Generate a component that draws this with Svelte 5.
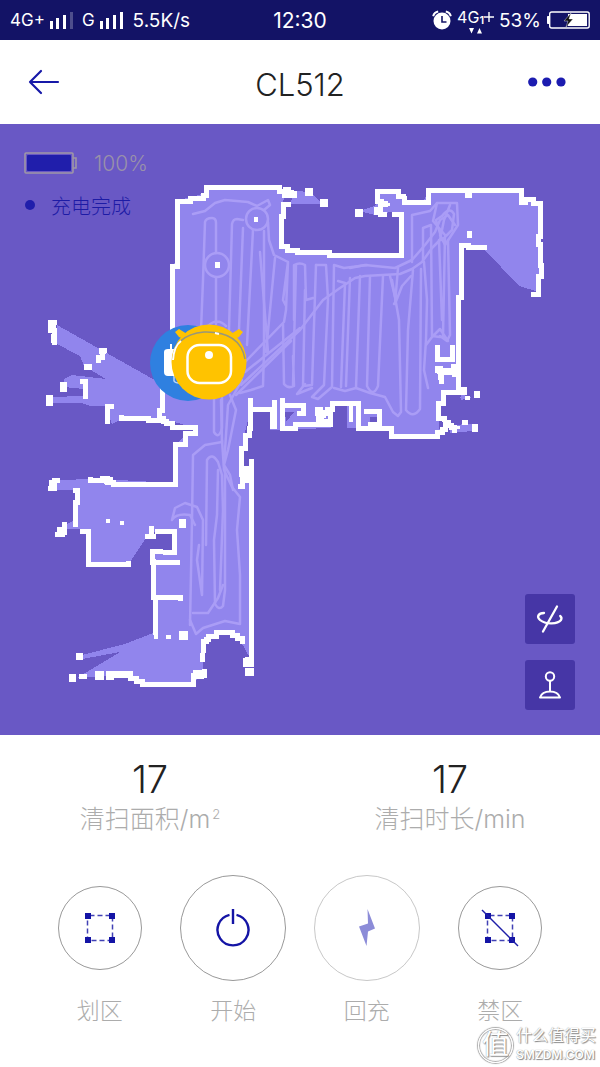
<script lang="ts">
  // Cleaning map, drawn in the same units as the phone screen
  const floor: string[] = [
    '172,266 177,260 177,200 192,197 204,193 206,187 277,187 284,196 283,204 281,218 281,246 292,251 330,254 396,255 401,250 401,213 375,208 378,191 398,191 406,202 422,202 430,191 520,191 522,202 540,203 540,290 536,291 519,286 484,249 461,244 461,340 457,365 460,390 445,395 438,415 440,433 437,436 391,436 391,428 358,428 347,428 347,404 333,404 331,428 270,430 270,410 251,409 245,432 241,485 251,470 251,660 240,640 222,632 206,640 202,673 193,684 140,684 125,675 77,678 120,652 82,659 82,655 125,644 153,633 153,553 175,550 175,532 150,532 130,562 88,562 86,530 60,528 75,520 75,490 52,490 52,480 100,479 174,483 175,446 184,436 197,428 166,420 120,420 112,424 106,406 90,406 82,403 50,403 50,397 84,396 84,389 64,387 64,379 72,375 106,379 84,366 80,356 55,343 57,325 160,383 172,350',
    '295,191 310,192 323,204 290,204',
    '359,211 375,206 400,210 375,215',
    '461,394 472,398 460,400',
    '450,425 472,424 472,431 450,433',
  ];

  const walls: string[] = [
    '172,366 172,266 177,262 177,201 190,201 190,198 203,195 206,187 276,187 279,191 284,193 284,195 294,193',
    '288,204 283,204 283,216 281,218 281,246 287,250 297,250 297,252 329,252 329,255 390,255 401,251 401,214 394,214',
    '384,214 376,209 380,204 385,203 377,198 377,191 398,191 398,196 406,196 404,202 424,202 428,198 428,190 521,190 521,202 525,199 533,203 540,203 540,236 538,244 540,265 541,276 538,284 538,294 533,294',
    '484,247 470,247 468,245 461,245 461,297 458,340 458,370 455,373 458,380 458,389 464,392 445,392 443,403 438,406 438,418 444,419',
    '437,347 437,359 452,359 452,347',
    '458,370 437,368 440,377 441,381',
    '445,372 453,374 453,366',
    '240,486 242,474 241,448 245,435 249,428 250,400',
    '251,409 272,409 272,426 274,426 274,402',
    '282,400 282,428 295,424 330,424 330,413 327,409 332,408 332,403 358,403 358,428 391,428 391,436 437,436 437,432 442,429 445,422 454,430',
    '282,405 303,405 303,413 299,413',
    '317,409 323,415 318,421 328,421',
    '366,411 379,411 379,424 370,426',
    '162,386 162,410 159,418 166,423 172,427 195,427 195,433 185,434 185,444 175,445 175,484 113,482 107,478 102,480 90,479',
    '160,420 148,418 121,417',
    '54,322 50,330 54,342',
    '104,350 102,357 98,360',
    '82,381 85,386 85,396',
    '111,406 107,408 107,421',
    '50,488 54,480 57,480',
    '75,490 77,502 75,524',
    '57,534 62,530 64,524',
    '82,531 88,534 88,564 110,564 128,563',
    '157,531 174,531 174,552 165,552',
    '160,551 152,555 152,562 177,562',
    '153,561 153,597 180,598',
    '155,600 155,632',
    '97,677 97,673 101,677',
    '108,677 108,673 111,677',
    '117,673 128,673 130,678 142,684 193,684 193,675 204,675 204,671',
    '203,650 203,641 208,636 216,632 226,632 232,635 242,641',
    '251,461 251,664 245,660',
    '249,468 246,480',
  ];

  const blobs: [number, number, number, number][] = [
    [283, 187, 8, 7], [305, 188, 8, 8], [289, 190, 5, 5], [320, 199, 8, 8],
    [254, 217, 4, 5], [215, 262, 5, 6], [355, 209, 8, 8], [465, 190, 7, 8],
    [467, 231, 5, 7], [387, 203, 3, 3], [46, 395, 7, 11], [60, 382, 7, 10],
    [50, 321, 6, 8], [51, 334, 6, 9], [99, 348, 7, 6], [84, 364, 8, 6],
    [49, 480, 7, 9], [57, 527, 10, 8], [106, 519, 4, 4], [120, 521, 4, 4],
    [179, 519, 7, 9], [145, 534, 11, 5], [149, 526, 5, 9], [154, 635, 4, 4],
    [166, 635, 5, 4], [179, 631, 9, 9], [76, 653, 7, 7], [69, 674, 7, 8],
    [79, 674, 8, 5], [200, 653, 5, 9], [193, 670, 11, 9], [245, 668, 9, 8],
    [474, 391, 6, 7], [465, 396, 5, 4], [472, 424, 6, 8], [462, 420, 6, 5],
    [457, 426, 3, 3], [245, 657, 9, 6], [437, 369, 14, 5], [452, 364, 9, 13],
    [315, 408, 8, 8], [114, 671, 17, 7], [104, 477, 9, 7], [349, 402, 4, 20],
  ];

  // Vacuum route
  const route: string[] = [
    'M193 214l12-3 10-8 10-3 23 2 9 4 11-6 2 5-6 5',
    'M246 219a11 11 0 1 1 22 0 11 11 0 0 1-22 0z',
    'M205 265a12 12 0 1 1 24 0 12 12 0 0 1-24 0z',
    'M201 330l2-50 2-58q1-4 7-4 4 0 4 5v30M216 278v46M208 326q9-9 18 0',
    'M229 330l3-106q1-5 5-5l6 1M243 228l-4 102M253 230l-6 115M264 231v119l-1 36-12 4-11 3',
    'M268 222l1 18 5 15 14 7-2 48-2 12-39 40M275 258l-9 94M288 262l-5 38 3 6M268 352l-8-100',
    'M283 324l1 60q4 5 10 2l-1-30M294 320v-55q6-3 11 0l1 35 7-2M305 290l-2 96 9-1 4-120M296 265l-3 120',
    'M316 265h10l2 34-4 86-9 9-3 3 6 2 14-12 2-122 10 3 23-3M305 384l-8 10 15-6',
    'M338 281l7 2-4 104M350 278l-4 108M334 388l11 3 11-3 14 5 15 4 8 15 5 4 3-4-2-92-7-40',
    'M241 385l59-55 23-30 17-12 15-10 10-2 35-2 12-5 10-7 10-14 8-8 4-20 6-15',
    'M245 372l55-44M236 395l55-54',
    'M350 268l15-3 30 3 17-8 13-15 10-13 5-12 8-5 7 10',
    'M360 276l-4 112M370 276l-3 110q6 12 11 0l5-110M413 270l-5 60-2 80q7 9 14-1l1-140M412 262v-47l18-4 7-8h20l1 22-13 20-5-10',
    'M390 276l6 25-2 3M398 268l-3 36 7-18 9-10',
    'M423 260v-32l8-3 1 111 8 1M424 262l3 38-1 40-2 30 4 18M426 345l6-8 8-8 8 12M437 203l-4 18 12 14-2 101M448 240l2 95-3 6-7-5M439 240l3 80M442 216q8-10 12-2l-2 16-10 10-6-20z',
    'M190 625l2-105 1-65 12-10 17-3-1-42M206 545l1-85q5-8 11 2l4 13 1 35-3 80',
    'M225 470v120l-2 16q-4 5-8-2l-1-64 3-25 1-45',
    'M172 520l3-12 10-5 12 4 6 13-1 75-5-35 2-15M172 520q4-7 18-5l5 10',
    'M190 620l6 14 7-6 22-7 15 3v-49l-3-45 3-33-8-10-8-17-2-30M193 613h15l10-15 5-13',
    'M230 395l6 15-8 40-4 15 6 10 3 15M214 395v37q5 8 8-4v-30M242 380l-14 25-4 60',
  ];

  function stairs(points: string): string {
    const list = points.split(' ').map((p) => p.split(',').map(Number));
    let d = `M${list[0][0]} ${list[0][1]}`;
    for (let i = 1; i < list.length; i++) {
      const [x0, y0] = list[i - 1];
      const [x1, y1] = list[i];
      const n = Math.max(1, Math.round(Math.min(Math.abs(x1 - x0), Math.abs(y1 - y0)) / 3));
      for (let k = 1; k <= n; k++) {
        const x = Math.round(x0 + ((x1 - x0) * k) / n);
        const y = Math.round(y0 + ((y1 - y0) * k) / n);
        d += `H${x}V${y}`;
      }
    }
    return d;
  }

  const stats = [
    { value: 17, label: '清扫面积/m', sup: '2' },
    { value: 17, label: '清扫时长/min', sup: '' },
  ];

  const actions = [
    { id: 'zone', label: '划区', large: false, disabled: false },
    { id: 'start', label: '开始', large: true, disabled: false },
    { id: 'dock', label: '回充', large: true, disabled: true },
    { id: 'forbid', label: '禁区', large: false, disabled: false },
  ];
</script>

<div class="app">
  <div class="status-bar">
    <div class="status-side">
      <span class="net">4G+</span>
      <svg width="24" height="18" viewBox="0 0 24 18" fill="#fff">
        <path d="M0 10h3v8H0zM6 7h3v11H6zM13 4h3v14h-3z" />
        <path d="M20 1h3v17h-3z" opacity=".25" />
      </svg>
      <span class="net second">G</span>
      <svg width="24" height="18" viewBox="0 0 24 18" fill="#fff">
        <path d="M0 10h3v8H0zM6 7h3v11H6zM13 4h3v14h-3zM20 1h3v17h-3z" />
      </svg>
      <span class="speed">5.5K/s</span>
    </div>
    <span class="clock">12:30</span>
    <div class="status-side right">
      <svg width="20" height="20" viewBox="0 0 20 20">
        <circle cx="10" cy="11" r="8.5" fill="#fff" />
        <path d="M1.2 6.2q1-3.8 5-4.6M18.8 6.2q-1-3.8-5-4.6" fill="none" stroke="#fff" stroke-width="2" />
        <path d="M10 6v6h4.5" fill="none" stroke="#151566" stroke-width="1.6" />
      </svg>
      <div class="roam">
        <span class="net">4G</span>
        <span class="sim">1</span>
        <svg width="10" height="24" viewBox="0 0 10 24">
          <path d="M0 9h10M5 4v10" stroke="#fff" stroke-width="1.4" />
        </svg>
        <svg class="traffic" width="14" height="6" viewBox="0 0 14 6" fill="#fff">
          <path d="M0 0h5L2.500 5.500zM8 5.500h5L10.500 0z" />
        </svg>
      </div>
      <span class="percent">53%</span>
      <svg width="44" height="18" viewBox="0 0 44 18">
        <rect x="3.7" y="1" width="39.5" height="16" rx="2" fill="none" stroke="#fff" stroke-width="1.4" />
        <path d="M3 5.500H1.500v7H3z" fill="#fff" stroke="#fff" />
        <path d="M22 3h19v12H22z" fill="#fff" />
        <path d="M25 2l-7 8h4l-2 6 7-8h-4z" fill="#111" stroke="#fff" stroke-width=".4" />
      </svg>
    </div>
  </div>

  <header>
    <button class="icon-button" aria-label="返回">
      <svg width="32" height="26" viewBox="0 0 32 26" fill="none" stroke="#1719a8" stroke-width="2.2" stroke-linecap="round" stroke-linejoin="round">
        <path d="M30 13H2M13 2L2 13l11 11" />
      </svg>
    </button>
    <h1>CL512</h1>
    <button class="icon-button more" aria-label="更多">
      <svg width="44" height="10" viewBox="0 0 44 10" fill="#1c1cb0">
        <circle cx="4.7" cy="5" r="4.6" /><circle cx="18.700" cy="5" r="4.6" /><circle cx="33" cy="5" r="4.6" />
      </svg>
    </button>
  </header>

  <main>
    <section class="map">
      <svg class="map-view" viewBox="0 124 600 611" role="img" aria-label="清扫地图">
        <g shape-rendering="crispEdges">
          {#each floor as points}
            <polygon {points} fill="#9185ed" />
          {/each}
          <!-- areas the robot never reached -->
          <path d="M253 413h15v17h-15zM335 406h12v18h-12zM285 412l9 0-8 10zM370 417h8v6h-8zM160 536h10v8l-10 6zM205 653l4-13 12-6 12 1 9 10v26h-38zM447 398h14l-3 22h-12z" fill="#6958c5" />
        </g>
        <g fill="none" stroke="#aa9df6" stroke-width="2.5" stroke-linejoin="round" stroke-linecap="round">
          {#each route as d}
            <path {d} />
          {/each}
        </g>
        <g shape-rendering="crispEdges">
          {#each walls as points}
            <path d={stairs(points)} fill="none" stroke="#fff" stroke-width="5" stroke-linecap="square" />
          {/each}
          {#each blobs as [x, y, width, height]}
            <rect {x} {y} {width} {height} fill="#fff" />
          {/each}
        </g>

        <!-- dock -->
        <circle cx="188" cy="363" r="38" fill="#2f80e0" />
        <path d="M171 344v7M165 352q0-2 3-2h10v25h-10q-3 0-3-3z" fill="#fff" stroke="#fff" stroke-width="2" />
        <path d="M174 376v5q1 2 5 2" fill="none" stroke="#b9d5f7" stroke-width="1.5" />
        <!-- robot -->
        <path d="M175 332l4-3 8 5-3 5-5-2zM243 332l-4-3-8 5 3 5 5-2z" fill="#ffc300" />
        <circle cx="209" cy="362" r="37.5" fill="#ffc300" />
        <path d="M173 360q1-25 31-28 36-1 41 27" fill="none" stroke="#98977a" stroke-width="1.5" />
        <path d="M173 360q1-14 8-19M219 334l-4-1" fill="none" stroke="#fff" stroke-width="2" />
        <rect x="187.5" y="345" width="43.5" height="38" rx="12" fill="none" stroke="#fff" stroke-width="2.5" />
        <circle cx="209" cy="355" r="4" fill="#fff" />
      </svg>

      <div class="robot-status">
        <div class="status-row">
          <svg width="54" height="22" viewBox="0 0 54 22">
            <rect x="1" y="1" width="48" height="20" rx="1" fill="none" stroke="#9e97a6" stroke-width="1.6" />
            <path d="M49 6h3v10h-3" fill="none" stroke="#9e97a6" stroke-width="1.6" />
            <rect x="3" y="3" width="44" height="16" rx="1" fill="#201eab" />
          </svg>
          <span class="charge">100%</span>
        </div>
        <div class="status-row state"><i class="dot"></i>充电完成</div>
      </div>

      <div class="map-tools">
        <button aria-label="旋转地图">
          <svg width="30" height="30" viewBox="0 0 30 30" fill="none" stroke="#fff" stroke-width="2.3" stroke-linecap="round">
            <path d="M22 2.500L8 27.500" />
            <path d="M9 9C3 9 1.500 13 5 16c6 5 18 4 21 0 .8-1.500.5-3-.8-4" />
          </svg>
        </button>
        <button aria-label="遥控">
          <svg width="30" height="30" viewBox="0 0 30 30" fill="none" stroke="#fff" stroke-width="2" stroke-linejoin="round">
            <circle cx="15" cy="6.5" r="4.2" />
            <path d="M15 11v10M5 27.500q2-6 10-6t10 6z" />
          </svg>
        </button>
      </div>
    </section>

    <section class="stats">
      {#each stats as stat}
        <div class="stat">
          <strong>{stat.value}</strong>
          <span>{stat.label}{#if stat.sup}<sup>{stat.sup}</sup>{/if}</span>
        </div>
      {/each}
    </section>

    <nav class="actions">
      {#each actions as action}
        <button class="action" disabled={action.disabled}>
          <span class="ring-box">
            <span class="ring" class:large={action.large}>
              {#if action.id === 'start'}
                <svg width="36" height="40" viewBox="0 0 36 40" fill="none" stroke="#1414a5" stroke-width="2.4">
                  <path d="M14.500 6.800a15.500 15.500 0 1 0 7 0M18 1v15" />
                </svg>
              {:else if action.id === 'dock'}
                <svg width="18" height="38" viewBox="0 0 18 38" fill="#8c8cd8">
                  <path d="M9.500 0L17 19.500l-7 3L8.500 37 1 17.500l9-3z" />
                </svg>
              {:else}
                <svg width="40" height="40" viewBox="0 0 40 40" fill="none" stroke="#4141b5" stroke-width="1.5">
                  <path d="M7.500 7.500h25v25h-25z" stroke-dasharray="5 3" stroke-dashoffset="-2" />
                  <path d="M5 5h6v6H5zM29 5h6v6h-6zM5 29h6v6H5zM29 29h6v6h-6z" fill="#1414a5" stroke="none" />
                  {#if action.id === 'forbid'}
                    <path d="M2 2l36 36" stroke="#1e1ea8" />
                  {/if}
                </svg>
              {/if}
            </span>
          </span>
          <span class="action-label">{action.label}</span>
        </button>
      {/each}
    </nav>
  </main>

  <div class="watermark">
    <span class="seal">值</span>
    <div class="brand">
      <span>什么值得买</span>
      <span class="domain">SMZDM.COM</span>
    </div>
  </div>
</div>

<style>
  :global(body) {
    margin: 0;
    background: #fff;
  }

  .app {
    position: relative;
    min-height: 100vh;
    overflow: hidden;
    background: #fff;
    color: #222;
    font-family: Inter, 'Noto Sans CJK SC', sans-serif;
    font-weight: 300;
  }

  button {
    padding: 0;
    border: none;
    background: none;
    font: inherit;
    cursor: pointer;
  }

  svg {
    display: block;
    flex: none;
  }

  .status-bar {
    display: flex;
    align-items: center;
    height: 40px;
    padding: 0 10px;
    background: #131366;
    color: #fff;
    font-weight: 400;
    white-space: nowrap;
  }

  .status-side {
    display: flex;
    flex: 1;
    align-items: center;
    gap: 5px;
  }

  .status-side.right {
    justify-content: flex-end;
  }

  .net {
    font-size: 17px;
  }

  .second {
    margin-left: 3px;
  }

  .speed {
    margin-left: 4px;
    font-size: 19px;
  }

  .clock {
    font-size: 21px;
  }

  .roam {
    position: relative;
    display: flex;
    align-items: center;
    height: 24px;
  }

  .roam .net {
    font-size: 16px;
    line-height: 18px;
    align-self: flex-start;
  }

  .sim {
    font-size: 11px;
    font-weight: 600;
  }

  .traffic {
    position: absolute;
    bottom: -2px;
    left: 12px;
  }

  .percent {
    font-size: 19px;
  }

  header {
    display: grid;
    grid-template-columns: 1fr auto 1fr;
    align-items: center;
    height: 84px;
    padding: 0 28px;
  }

  .icon-button {
    display: flex;
    align-items: center;
  }

  .more {
    justify-self: end;
  }

  h1 {
    margin: 4px 0 0;
    font-size: 31px;
    font-weight: 300;
  }

  .map {
    position: relative;
    background: #6958c5;
  }

  .map-view {
    width: 100%;
    height: auto;
  }

  .robot-status {
    position: absolute;
    top: 26px;
    left: 24px;
    display: flex;
    flex-direction: column;
    gap: 16px;
  }

  .status-row {
    display: flex;
    align-items: center;
    gap: 16px;
    height: 26px;
    color: #1d1ba5;
    font-size: 20px;
  }

  .charge {
    color: #9991aa;
    font-size: 21px;
  }

  .dot {
    width: 10px;
    height: 10px;
    margin-left: 1px;
    border-radius: 50%;
    background: #201eab;
  }

  .map-tools {
    position: absolute;
    right: 25px;
    bottom: 25px;
    display: flex;
    flex-direction: column;
    gap: 16px;
  }

  .map-tools button {
    display: flex;
    align-items: center;
    justify-content: center;
    width: 50px;
    height: 50px;
    border-radius: 3px;
    background: #4636a6;
  }

  .stats {
    display: flex;
    padding-top: 22px;
  }

  .stat {
    display: flex;
    flex: 1;
    flex-direction: column;
    align-items: center;
    color: #acacac;
    font-size: 25px;
    line-height: 36px;
  }

  .stat strong {
    color: #222;
    font-size: 38px;
    font-weight: 300;
    line-height: 44px;
  }

  sup {
    margin-left: 2px;
    font-size: 13px;
    line-height: 0;
  }

  .actions {
    display: flex;
    justify-content: center;
    padding: 38px 33px 0;
  }

  .action {
    display: flex;
    flex: 1;
    flex-direction: column;
    align-items: center;
    gap: 12px;
    color: #acacac;
    font-size: 23px;
    line-height: 36px;
  }

  .ring-box {
    display: flex;
    align-items: center;
    height: 106px;
  }

  .ring {
    display: flex;
    align-items: center;
    justify-content: center;
    box-sizing: border-box;
    width: 84px;
    height: 84px;
    border: 1px solid #999;
    border-radius: 50%;
  }

  .ring.large {
    width: 106px;
    height: 106px;
  }

  .action:disabled .ring {
    border-color: #c8c8c8;
  }

  .watermark {
    position: absolute;
    right: 4px;
    bottom: 2px;
    display: flex;
    align-items: center;
    gap: 3px;
    color: #fff;
    font-weight: 400;
    text-shadow: 1px 1px 1px #888, 0 0 1px #888;
  }

  .seal {
    width: 33px;
    height: 33px;
    border: 1px solid #fff;
    border-radius: 50%;
    box-shadow: 0 0 1px 1px #aaa, inset 0 0 1px 1px #aaa;
    font-size: 27px;
    line-height: 32px;
    text-align: center;
  }

  .brand {
    display: flex;
    flex-direction: column;
    font-size: 16px;
    line-height: 20px;
  }

  .domain {
    font-size: 12px;
    font-weight: 600;
  }
</style>
